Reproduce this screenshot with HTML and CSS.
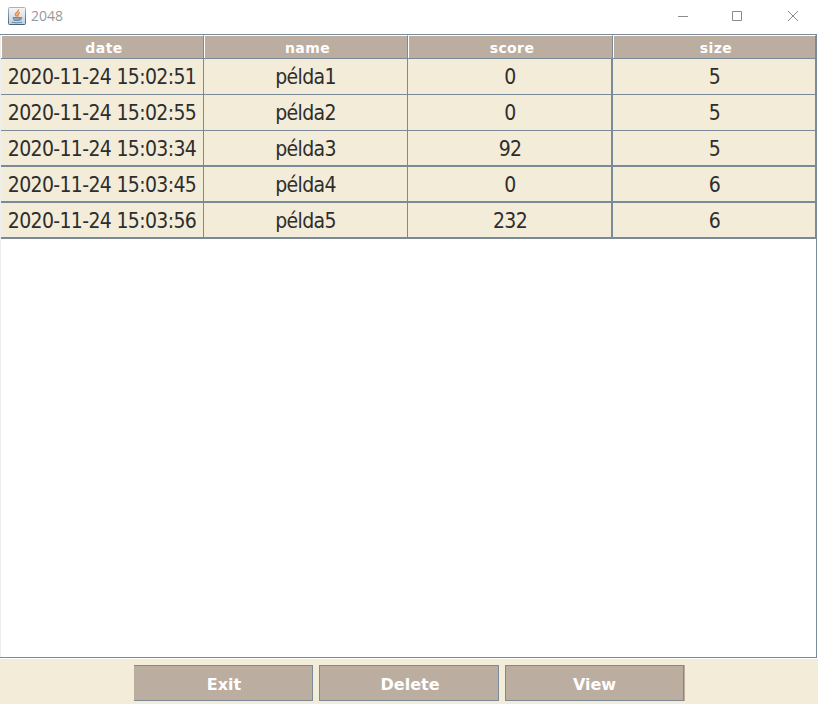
FILE: index.html
```
<!DOCTYPE html>
<html lang="hu">
<head>
<meta charset="utf-8">
<title>2048</title>
<link rel="stylesheet" href="styles.css">
</head>
<body>
<div class="window">
  <header class="titlebar">
    <svg class="logo" width="18" height="18" viewBox="0 0 18 18">
      <defs><linearGradient id="g" x2="0" y2="1"><stop offset="0" stop-color="#a5b4c0"/><stop offset="1" stop-color="#44647e"/></linearGradient>
      <linearGradient id="f" x2="0" y2="1"><stop offset="0" stop-color="#f4f6f8"/><stop offset="1" stop-color="#c3d0dc"/></linearGradient></defs>
      <rect x=".5" y=".5" width="17" height="17" rx="1" fill="url(#f)" stroke="url(#g)"/>
      <path d="M10.500 2.500C11 5 7 5.500 7.500 7.500q.2 1 1.200 2M11.800 5.500C9 6.500 10.500 8 9.500 9.500" fill="none" stroke="#ee8b3c" stroke-width="1.600"/>
      <path d="M5 10.500h7l-.8 3h-5zM12 10.500q2.500-.3 1.800 1.200-.5.900-2.300 1.200M3.500 15.200q5 1.300 10.500 0" fill="#7890a4" fill-opacity=".7" stroke="#6d8aa2"/>
    </svg>
    <span class="title">2048</span>
    <svg class="controls" width="122" height="12" viewBox="0 0 122 12" fill="none" stroke="#8c8c8c">
      <path d="M0 6.500h10M54.500 1.500h9v9h-9z"/>
      <path d="M110 1l10 10M120 1l-10 10"/>
    </svg>
  </header>
  <main class="pane">
    <div class="head"><div>date</div><div>name</div><div>score</div><div>size</div></div>
    <div class="row"><div>2020-11-24 15:02:51</div><div>példa1</div><div>0</div><div>5</div></div>
    <div class="row"><div>2020-11-24 15:02:55</div><div>példa2</div><div>0</div><div>5</div></div>
    <div class="row thick"><div>2020-11-24 15:03:34</div><div>példa3</div><div>92</div><div>5</div></div>
    <div class="row thick"><div>2020-11-24 15:03:45</div><div>példa4</div><div>0</div><div>6</div></div>
    <div class="row thick"><div>2020-11-24 15:03:56</div><div>példa5</div><div>232</div><div>6</div></div>
  </main>
  <footer class="actions">
    <button class="exit">Exit</button><button>Delete</button><button class="view">View</button>
  </footer>
</div>
</body>
</html>
```
FILE: styles.css
```
* { box-sizing: border-box; }
body { margin: 0; background: #fff; }
.window { width: 818px; height: 704px; display: flex; flex-direction: column; overflow: hidden; }
.titlebar { height: 34px; display: flex; align-items: center; padding: 0 18px 2px 8px; }
.title { margin-left: 5px; font: 14px/20px "Open Sans", sans-serif; color: #999; }
.controls { margin-left: auto; }
.pane {
  height: 624px;
  margin-right: 1px;
  border-top: 1px solid #7a8a99;
  border-right: 1px solid #7a8a99;
  border-bottom: 1px solid #7a8a99;
  box-shadow: inset 1px 0 #eee;
}
.head, .row { display: grid; grid-template-columns: 203px 204px 205px 203px; margin-left: 1px; }
.head > div, .row > div { display: flex; align-items: center; justify-content: center; white-space: nowrap; }
.head { height: 24px; border-bottom: 1px solid #7a8a99; color: #fff; font: bold 14px/20px "DejaVu Sans", sans-serif; letter-spacing: .4px; }
.head > div { background: #bbada0; border-top: 1px solid #fff; border-left: 1px solid #fff; border-right: 1px solid #7a8a99; padding: 1px 0 0 3px; }
.row { height: 36px; color: #2e2e2e; font: 21px/28px "DejaVu Sans Condensed", "DejaVu Sans", sans-serif; font-stretch: condensed; letter-spacing: -.65px; }
.row > div { background: #f3ecd8; border-right: 1px solid #7a8a99; border-bottom: 1px solid #7a8a99; }
.row > div:nth-child(3) { border-right-width: 2px; padding-left: 1px; }
.row > div:nth-child(4) { padding-left: 1px; }
.row.thick > div { border-bottom-width: 2px; padding-top: 1px; }
.actions { flex: 1; display: flex; gap: 6px; margin-top: 1px; padding: 6px 0 0 134px; background: #f3ecd8; }
button { width: 180px; height: 36px; margin: 0; padding: 3px 0 0 2px; border: 1px solid #7a8a99; border-radius: 0; background: #bbada0; color: #fff; font: bold 16px/20px "DejaVu Sans", sans-serif; }
.exit { width: 179px; border-left: 0; }
.view { width: 179px; padding-left: 0; box-shadow: 1px 0 #bbada0; }
```
